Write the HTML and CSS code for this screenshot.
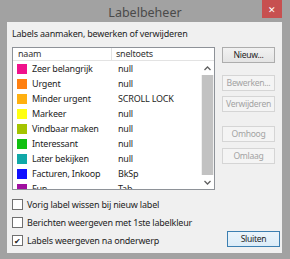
FILE: index.html
```html
<!DOCTYPE html>
<html lang="nl">
<head>
  <meta charset="UTF-8" />
  <title>Labelbeheer</title>
  <link rel="stylesheet" href="styles.css">
</head>
<body>
  <div class="window">
    <div class="titlebar">
      <span class="title">Labelbeheer</span>
      <span class="close">&#x2715;</span>
    </div>
    <div class="content">
      <div class="intro">Labels aanmaken, bewerken of verwijderen</div>
      <div class="main">
        <div class="listbox">
          <div class="list-header">
            <span class="col-name">naam</span>
            <span class="col-key">sneltoets</span>
          </div>
          <div class="list-body">
            <div class="rows">
              <div class="row"><span class="swatch" style="background:#f0128c"></span><span class="name">Zeer belangrijk</span><span class="key">null</span></div>
              <div class="row"><span class="swatch" style="background:#ff7f10"></span><span class="name">Urgent</span><span class="key">null</span></div>
              <div class="row"><span class="swatch" style="background:#ffb010"></span><span class="name">Minder urgent</span><span class="key">SCROLL LOCK</span></div>
              <div class="row"><span class="swatch" style="background:#ffff10"></span><span class="name">Markeer</span><span class="key">null</span></div>
              <div class="row"><span class="swatch" style="background:#a4c400"></span><span class="name">Vindbaar maken</span><span class="key">null</span></div>
              <div class="row"><span class="swatch" style="background:#10c010"></span><span class="name">Interessant</span><span class="key">null</span></div>
              <div class="row"><span class="swatch" style="background:#10a8a8"></span><span class="name">Later bekijken</span><span class="key">null</span></div>
              <div class="row"><span class="swatch" style="background:#1010ff"></span><span class="name">Facturen, Inkoop</span><span class="key">BkSp</span></div>
              <div class="row"><span class="swatch" style="background:#a010a0"></span><span class="name">Fun</span><span class="key">Tab</span></div>
            </div>
            <div class="scrollbar">
              <div class="arrow">
                <svg width="7" height="5" viewBox="0 0 7 5"><path d="M0.5 4 L3.5 1 L6.5 4" fill="none" stroke="#606060" stroke-width="1.3"/></svg>
              </div>
              <div class="thumb"></div>
              <div class="arrow">
                <svg width="7" height="5" viewBox="0 0 7 5"><path d="M0.5 1 L3.5 4 L6.5 1" fill="none" stroke="#606060" stroke-width="1.3"/></svg>
              </div>
            </div>
          </div>
        </div>
        <div class="buttons">
          <div class="btn">Nieuw...</div>
          <div class="btn disabled b-edit">Bewerken...</div>
          <div class="btn disabled b-del">Verwijderen</div>
          <div class="btn disabled b-up">Omhoog</div>
          <div class="btn disabled b-down">Omlaag</div>
        </div>
      </div>
      <div class="bottom">
        <div class="checks">
          <label class="check"><span class="box"></span>Vorig label wissen bij nieuw label</label>
          <label class="check"><span class="box"></span>Berichten weergeven met 1ste labelkleur</label>
          <label class="check"><span class="box checked">&#x2714;</span>Labels weergeven na onderwerp</label>
        </div>
        <div class="btn default">Sluiten</div>
      </div>
    </div>
  </div>
</body>
</html>
```

FILE: styles.css
```css
body { margin: 0; background: #a2a2a2; font-family: "Noto Sans", sans-serif; font-size: 9px; letter-spacing: -0.2px; color: #1e1e1e; }
.window { width: 290px; height: 259px; display: flex; flex-direction: column; background: #a2a2a2; }
.titlebar { height: 22px; position: relative; display: flex; justify-content: center; align-items: center; }
.title { font-size: 12.5px; letter-spacing: 0; color: #4a4a4a; margin-top: 2px; }
.close { position: absolute; left: 262px; top: 0; width: 20px; height: 18px; background: #c75050; color: white; font-size: 9px; display: flex; align-items: center; justify-content: center; }
.content { margin: 0 8px 6px 7px; flex: 1; background: #f0f0f0; padding: 5px 0 0 5px; }
.intro { height: 14px; line-height: 14px; color: #1e1e1e; }
.main { display: flex; gap: 7px; margin-top: 6px; }
.listbox { width: 201px; height: 141px; border: 1px solid #8e9298; background: white; display: flex; flex-direction: column; overflow: hidden; }
.list-header { height: 12px; border-bottom: 1px solid #e3e3e3; display: flex; line-height: 12px; color: #333; }
.col-name { width: 93px; padding-left: 5px; border-right: 1px solid #e3e3e3; }
.col-key { padding-left: 4px; }
.list-body { flex: 1; display: flex; overflow: hidden; }
.rows { flex: 1; }
.row { height: 15px; display: flex; align-items: center; }
.swatch { width: 10px; height: 10px; margin-left: 4px; margin-right: 5px; }
.name { width: 84px; }
.key { padding-left: 2px; }
.scrollbar { width: 13px; display: flex; flex-direction: column; background: #f0f0f0; }
.arrow { height: 14px; display: flex; align-items: center; justify-content: center; background: white; }
.thumb { flex: 1; margin: 0 1px; background: #c2c2c2; }
.buttons { width: 53px; display: flex; flex-direction: column; }
.btn { height: 14px; line-height: 14px; text-align: center; border: 1px solid #adadad; background: linear-gradient(#f2f2f2, #e4e4e4); color: #1e1e1e; font-size: 8.6px; letter-spacing: -0.3px; white-space: nowrap; overflow: hidden; }
.btn.disabled { border-color: #d5d5d5; background: #f4f4f4; color: #a3a3a3; }
.b-edit { margin-top: 12px; }
.b-del { margin-top: 5px; }
.b-up { margin-top: 14px; }
.b-down { margin-top: 6px; }
.bottom { display: flex; justify-content: space-between; align-items: flex-end; margin-top: 5px; width: 268px; }
.checks { display: flex; flex-direction: column; }
.check { height: 18px; display: flex; align-items: center; }
.box { width: 9px; height: 9px; border: 1px solid #707070; background: white; margin-right: 4px; font-size: 8px; line-height: 9px; text-align: center; color: #222; }
.btn.default { width: 51px; border-color: #3c7fb1; background: linear-gradient(#eaf4fb, #dcecf8); margin-bottom: 2px; }
```
